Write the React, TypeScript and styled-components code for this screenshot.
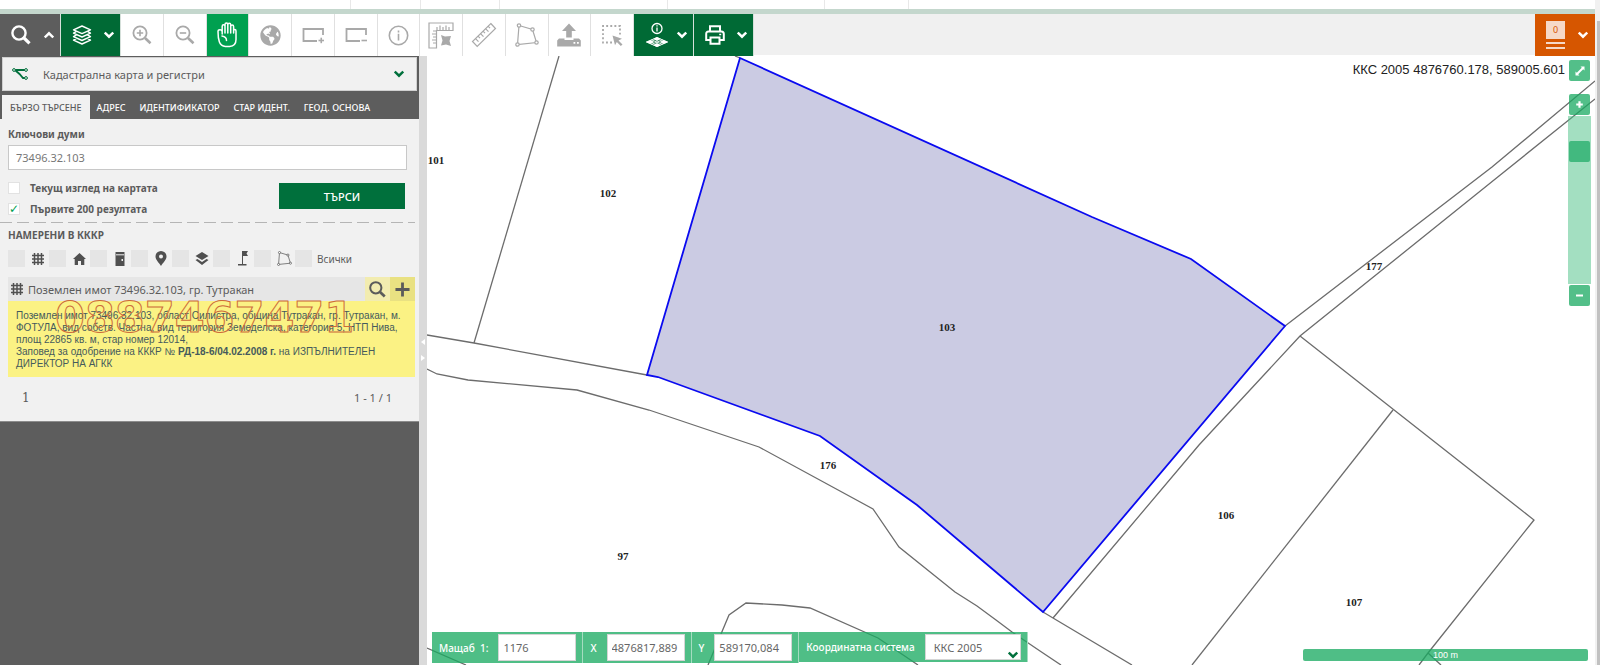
import React from "react";
import styled, { createGlobalStyle, css } from "styled-components";
import { FaGlobeAmericas } from "react-icons/fa";

const GlobalStyle = createGlobalStyle`
  *, *::before, *::after { box-sizing: border-box; }
  body { margin: 0; background: #fff; font-family: "Noto Sans", sans-serif; font-size: 11px; color: #5b5b5b; }
  button, input, select { font: inherit; color: inherit; margin: 0; }
  button { border: 0; padding: 0; background: none; cursor: pointer; }
  svg { display: block; flex: none; }
`;

const Page = styled.div`
  display: flex;
  height: 100vh;
  overflow: hidden;
`;

const Main = styled.div`
  flex: 1;
  min-width: 0;
  display: flex;
  flex-direction: column;
`;

const ScrollTrack = styled.div`
  width: 5px;
  padding: 21px 0 0 2px;
  background: #f1f1f1;
`;

const ScrollThumb = styled.div`
  height: 100%;
  background: #c1c1c1;
`;

/* ---------- header ---------- */

const HeaderStrip = styled.div`
  display: grid;
  grid-template-columns: 351px 70px 79px 168px 157px 84px 1fr;
  height: 14px;
  flex: none;
  border-bottom: 5px solid #c4d7cd;
`;

const HeaderCell = styled.div`
  border-right: 1px solid #e8e8e8;
  &:last-child { border-right: 0; }
`;

const Toolbar = styled.div`
  display: flex;
  height: 42px;
  flex: none;
`;

const ToolbarFill = styled.div`
  flex: 1;
  height: 41px;
  background: #f0f0f0;
`;

const MenuButton = styled.button<{ $bg: string; $width?: number }>`
  display: flex;
  align-items: center;
  justify-content: space-between;
  width: ${(p) => p.$width ?? 60}px;
  height: 42px;
  padding: 0 6px 0 11px;
  color: #fff;
  background: ${(p) => p.$bg};
  border-right: 1px solid #d5e0da;
`;

const ToolGrid = styled.div`
  display: grid;
  grid-template-columns: repeat(12, 1fr);
  width: 513px;
`;

const ToolButton = styled.button<{ $active?: boolean }>`
  display: flex;
  align-items: center;
  justify-content: center;
  color: ${(p) => (p.$active ? "#fff" : "#a9a9a9")};
  background: ${(p) => (p.$active ? "#00a050" : "#fff")};
  border-right: 1px solid #e0e0e0;
`;

const BasketButton = styled.button`
  display: flex;
  align-items: center;
  justify-content: space-between;
  width: 60px;
  height: 42px;
  padding: 0 7px 0 11px;
  color: #fff;
  background: #d65600;
`;

const BasketStack = styled.span`
  display: flex;
  flex-direction: column;
  gap: 3px;
  width: 19px;
`;

const BasketCount = styled.span`
  height: 18px;
  line-height: 18px;
  font-size: 9px;
  text-align: center;
  color: #d65600;
  background: #f6d9c8;
`;

const BasketLine = styled.span`
  height: 2px;
  background: #f6d9c8;
`;

/* ---------- side panel ---------- */

const Body = styled.div`
  flex: 1;
  min-height: 0;
  display: flex;
`;

const Panel = styled.aside`
  width: 419px;
  flex: none;
  background: #5d5d5d;
`;

const RegisterPicker = styled.button`
  display: flex;
  align-items: center;
  width: 415px;
  height: 34px;
  margin: 1px 0 4px 2px;
  padding: 0 12px 0 9px;
  gap: 15px;
  text-align: left;
  background: #f1f1f1;
  border: 1px solid #d0d0d0;
`;

const RegisterName = styled.span`
  flex: 1;
`;

const PickerArrow = styled.span`
  color: #00703c;
`;

const Tabs = styled.div`
  display: flex;
  height: 24px;
  padding-left: 2px;
`;

const Tab = styled.button<{ $active?: boolean }>`
  padding: 0 7px;
  font-size: 9px;
  font-weight: 500;
  white-space: nowrap;
  color: #fff;
  ${(p) =>
    p.$active &&
    css`
      padding: 0 8px;
      background: #f1f1f1;
      color: #5b5b5b;
    `}
`;

const PanelContent = styled.div`
  height: 303px;
  background: #f1f1f1;
  border-bottom: 1px solid #8c8c8c;
`;

const SearchForm = styled.form`
  padding: 7px 13px 0 8px;
`;

const FieldLabel = styled.label`
  display: block;
  line-height: 16px;
  font-size: 10px;
  font-weight: 700;
`;

const KeywordInput = styled.input`
  display: block;
  width: 399px;
  height: 25px;
  margin-top: 3px;
  padding: 0 7px;
  color: #777;
  background: #fff;
  border: 1px solid #c8c8c8;
  outline: 0;
`;

const FormRow = styled.div`
  display: flex;
  justify-content: space-between;
  padding: 7px 0 0;
  height: 52px;
`;

const CheckList = styled.div`
  display: flex;
  flex-direction: column;
`;

const CheckLabel = styled.label`
  display: flex;
  align-items: center;
  gap: 10px;
  height: 21px;
  font-size: 10px;
  font-weight: 700;
`;

const CheckBox = styled.input`
  appearance: none;
  display: grid;
  place-items: center;
  width: 12px;
  height: 12px;
  background: #fff;
  border: 1px solid #e2e2e2;
  &:checked::after {
    content: "✓";
    font: 12px/10px "DejaVu Sans", sans-serif;
    color: #00a050;
  }
`;

const SearchButton = styled.button`
  width: 126px;
  height: 26px;
  margin: 6px 1px 0 0;
  color: #fff;
  font-weight: 500;
  background: #00703c;
`;

const Dashes = styled.div`
  width: 415px;
  height: 1px;
  background: repeating-linear-gradient(90deg, #b5b5b5 0 12px, transparent 12px 17px);
`;

const ResultHeading = styled.h2`
  margin: 0;
  padding: 3px 8px 0;
  font-size: 10px;
  line-height: 18px;
  font-weight: 700;
`;

const FilterRow = styled.div`
  display: flex;
  padding: 6px 8px 10px;
`;

const FilterLabel = styled.label`
  display: flex;
  align-items: center;
  width: 41px;
  white-space: nowrap;
  font-size: 10px;
`;

const FilterBox = styled.input`
  appearance: none;
  flex: none;
  width: 17px;
  height: 17px;
  background: #e5e5e5;
`;

const FilterIcon = styled.span`
  flex: 1;
  display: grid;
  place-items: center;
  padding-left: 2px;
`;

const FilterText = styled.span`
  padding-left: 5px;
`;

const ResultHead = styled.div`
  display: flex;
  align-items: center;
  width: 407px;
  height: 24px;
  margin-left: 8px;
  padding-left: 3px;
  gap: 5px;
  background: #e6e6e6;
`;

const ResultTitle = styled.span`
  flex: 1;
`;

const ResultActions = styled.div`
  display: flex;
`;

const ResultAction = styled.button<{ $bg: string }>`
  display: grid;
  place-items: center;
  width: 25px;
  height: 24px;
  color: #5b5b5b;
  background: ${(p) => p.$bg};
`;

const ResultBody = styled.div`
  position: relative;
  width: 407px;
  height: 76px;
  margin-left: 8px;
  padding: 9px 8px;
  font: 10px/12px "Liberation Sans", Arial, sans-serif;
  color: #455a5c;
  background: #fbf284;
`;

const ResultText = styled.p`
  margin: 0;
  white-space: nowrap;
`;

const Watermark = styled.span`
  position: absolute;
  top: -5px;
  left: 47px;
  font: 700 43px/43px "DejaVu Sans", sans-serif;
  color: transparent;
  -webkit-text-stroke: 1px #cd6b3a;
`;

const Pager = styled.div`
  display: flex;
  justify-content: space-between;
  padding: 12px 27px 0 22px;
  line-height: 18px;
`;

const PageNumber = styled.span`
  font-family: "DejaVu Serif", serif;
  font-size: 12px;
`;

const Splitter = styled.div`
  display: flex;
  flex-direction: column;
  align-items: center;
  justify-content: center;
  gap: 10px;
  width: 8px;
  flex: none;
  padding-bottom: 22px;
  background: #dadada;
`;

/* ---------- map ---------- */

const MapArea = styled.main`
  position: relative;
  flex: 1;
  min-width: 0;
  overflow: hidden;
  background: #fff;
`;

const MapDrawing = styled.svg`
  position: absolute;
  inset: 0;
  width: 100%;
  height: 100%;
`;

const Coordinates = styled.output`
  position: absolute;
  top: 5px;
  right: 30px;
  font: 13px/18px "Liberation Sans", Arial, sans-serif;
  color: #222;
`;

const MapControls = styled.div`
  position: absolute;
  top: 4px;
  right: 4px;
  width: 23px;
  display: flex;
  flex-direction: column;
  align-items: center;
`;

const MapButton = styled.button<{ $spaced?: boolean }>`
  display: grid;
  place-items: center;
  width: 21px;
  height: 21px;
  margin-bottom: ${(p) => (p.$spaced ? 13 : 0)}px;
  color: #fff;
  border-radius: 2px;
  background: rgba(26, 170, 98, 0.75);
`;

const ZoomSlider = styled.input`
  appearance: none;
  writing-mode: vertical-lr;
  width: 23px;
  height: 168px;
  margin: 1px 0;
  background: rgba(72, 191, 131, 0.5);
  &::-webkit-slider-thumb {
    appearance: none;
    width: 21px;
    height: 21px;
    border-radius: 2px;
    background: #42b97f;
  }
`;

const StatusBar = styled.form`
  position: absolute;
  left: 5px;
  bottom: 2px;
  display: flex;
  align-items: flex-start;
`;

const StatusField = styled.label<{ $short?: boolean }>`
  display: flex;
  align-items: center;
  gap: 10px;
  height: ${(p) => (p.$short ? 30 : 31)}px;
  padding: 0 6px 0 7px;
  font-size: 10px;
  font-weight: 500;
  color: #fff;
  background: rgba(26, 170, 98, 0.77);
  border-right: 1px solid #a5dcc0;
  white-space: pre;
`;

const StatusInput = styled.input`
  width: 78px;
  height: 27px;
  padding: 0 4px;
  font-size: 11px;
  font-weight: 400;
  color: #666;
  background: #fff;
  border: 1px solid #d5d5d5;
`;

const SelectWrap = styled.span`
  position: relative;
  display: block;
`;

const SystemSelect = styled.select`
  appearance: none;
  display: block;
  width: 96px;
  height: 26px;
  padding: 0 8px;
  font-size: 11px;
  font-weight: 400;
  color: #666;
  background: #fff;
  border: 1px solid #d5d5d5;
  border-radius: 0;
`;

const SelectArrow = styled.span`
  position: absolute;
  right: 3px;
  bottom: 0;
  color: #00703c;
  pointer-events: none;
`;

const ScaleLine = styled.div`
  position: absolute;
  right: 7px;
  bottom: 4px;
  width: 285px;
  height: 12px;
  font: 9px/12px "Liberation Sans", Arial, sans-serif;
  text-align: center;
  color: #fff;
  border-radius: 2px;
  background: rgba(26, 170, 98, 0.77);
`;

/* ---------- icons ---------- */

const Chevron = ({ up, size = 10, w = 2.4 }: { up?: boolean; size?: number; w?: number }) => (
  <svg width={size} height={size} viewBox="0 0 10 10" fill="none" stroke="currentColor" strokeWidth={w}>
    <path d={up ? "M.8 7.5 5 3.3 9.2 7.5" : "M.8 2.500 5 6.700 9.200 2.500"} />
  </svg>
);

const Magnifier = ({ size = 20, sign, w = 2.4 }: { size?: number; sign?: string; w?: number }) => (
  <svg width={size} height={size} viewBox="0 0 20 20" fill="none" stroke="currentColor" strokeWidth={w}>
    <circle cx="8" cy="8" r="6.6" />
    <path d="m13 13 5.500 5.300" strokeWidth={w + 0.8} />
    {sign === "+" && <path d="M8 4.8v6.4M4.8 8h6.4" strokeWidth="1.6" />}
    {sign === "-" && <path d="M4.8 8h6.4" strokeWidth="1.6" />}
  </svg>
);

const LayersIcon = () => (
  <svg width="20" height="20" viewBox="0 0 20 20" fill="none" stroke="currentColor" strokeWidth="1.4" strokeLinejoin="round">
    <path d="M10 1 18.5 4.8 10 8.6 1.5 4.8Z" />
    <path d="M4.5 6.4 1.5 8.2 10 12 18.5 8.2 15.5 6.4M4.5 9.9 1.5 11.7 10 15.5 18.5 11.7 15.5 9.9M4.5 13.4 1.5 15.2 10 19 18.5 15.2 15.5 13.4" />
  </svg>
);

const HandIcon = () => (
  <svg width="20" height="26" viewBox="0 0 20 26" fill="none" stroke="currentColor" strokeWidth="1.5" strokeLinecap="round" strokeLinejoin="round">
    <path d="M5.2 12V4.3c0-2.1 2.8-2.1 2.8 0V11M8 4.3V2.6c0-2.1 2.8-2.1 2.8 0V11M10.800 2.800c0-2.100 2.900-2.100 2.900 0V11M13.700 4.500c0-2.100 2.900-2.100 2.900 0V11M16.600 9c0-1.900 2.400-1.900 2.400 0v8.500c0 4.300-2.600 6.700-6.400 7H8.400c-3-.3-5-1.700-6-4.500C1.300 17 1 14 1 9.500c0-1 .7-1.700 2-1.700 1 0 2 .7 2.200 1.700M5 14c3 .5 4.500 2 4.500 4.500" />
  </svg>
);

const FrameIcon = ({ sign }: { sign: string }) => (
  <svg width="24" height="20" viewBox="0 0 24 20" fill="none" stroke="currentColor" strokeWidth="1.6">
    <path d="M16 16H2.500V4H22v6" strokeWidth="1.800" />
    <path d="M17.500 15.500h5.500" />
    {sign === "+" && <path d="M20.250 12.700v5.500" />}
  </svg>
);

const InfoIcon = () => (
  <svg width="21" height="21" viewBox="0 0 21 21" fill="none" stroke="currentColor" strokeWidth="1.600">
    <circle cx="10.500" cy="10.500" r="9.200" />
    <path d="M10.500 8.800v6.700M10.500 5.500v2" />
  </svg>
);

const RulerAreaIcon = () => (
  <svg width="26" height="27" viewBox="0 0 26 27" fill="none" stroke="#a9a9a9" strokeWidth="1.2">
    <path d="M1 1h24v7.500H8.500V26H1Z" />
    <path d="M9 5v3M12 3.500v5M15 5v3M18 3.500v5M21 5v3M5 9h3.500M4 12h4.500M5 15h3.500M4 18h4.500M5 21h3.500" />
    <path d="m13 13 4 1.500 6-.5-1.500 5 1.500 5-5-1.500-5 1 1.500-5Z" fill="#a9a9a9" stroke="none" />
  </svg>
);

const RulerIcon = () => (
  <svg width="26" height="26" viewBox="0 0 26 26" fill="none" stroke="currentColor" strokeWidth="1.2">
    <path d="M19.800 1.500 24.500 6.500 6.200 24.500 1.500 19.500Z" />
    <path d="m17 4.200 2 2M14.500 6.700l3 3M12 9.200l2 2M9.500 11.700l3 3M7 14.200l2 2M4.500 16.700l3 3" />
  </svg>
);

const PolygonIcon = ({ size = 24 }: { size?: number }) => (
  <svg width={size} height={size} viewBox="0 0 24 24" fill="#fff" stroke="currentColor" strokeWidth="1.200">
    <path d="M4 2.500 17.500 6.500 21.500 19.500 2.500 21.500Z" fill="none" />
    <circle cx="4" cy="2.500" r="1.700" />
    <circle cx="17.500" cy="6.500" r="1.700" />
    <circle cx="21.500" cy="19.500" r="1.700" />
    <circle cx="2.500" cy="21.500" r="1.700" />
  </svg>
);

const UploadIcon = () => (
  <svg width="24" height="24" viewBox="0 0 24 24" fill="currentColor">
    <path d="M12 .5 19 8h-4.200v6.500H9.200V8H5Z" />
    <path d="M2 15.500h5.500v1.500h9v-1.500H22l1.800 2v6H.2v-6Z" />
    <path d="M16.500 19h1.800v1.800h-1.800zM20 19h1.800v1.800H20z" fill="#fff" />
  </svg>
);

const MarqueeIcon = () => (
  <svg width="22" height="22" viewBox="0 0 22 22" fill="none" stroke="currentColor" strokeWidth="1.8">
    <path d="M11 18.500H2V2h17v9" strokeDasharray="1.900 2.200" />
    <path d="m11.500 11.500 9.500 3.200-3.500 1.800 4 4-1.700 1.500-4-4-1.800 3.200Z" fill="currentColor" stroke="none" />
  </svg>
);

const InfoLayersIcon = () => (
  <svg width="24" height="26" viewBox="0 0 24 26" fill="none" stroke="currentColor" strokeWidth="1.300">
    <circle cx="12" cy="6.500" r="5" />
    <path d="M12 5.500v4M12 3.300v1.300" />
    <path d="m12 15 4 2-4 2-4-2ZM5.500 18l4 2-4 2L.8 20ZM18.500 18l4.700 2-4.700 2-4-2ZM12 21l4 2-4 2-4-2Z" fill="currentColor" stroke="none" />
    <path d="M12 15.500 22.500 20 12 24.600 1.500 20ZM6.500 17.800l11 4.600M17.500 17.800l-11 4.600" strokeWidth=".9" />
  </svg>
);

const PrinterIcon = () => (
  <svg width="20" height="20" viewBox="0 0 20 20" fill="none" stroke="currentColor" strokeWidth="2">
    <path d="M5 6.500V1.200h10v5.300M5 15H1.200V9c0-1.600.8-2.500 2.300-2.500h13c1.500 0 2.300.9 2.300 2.500v6H15" />
    <path d="M5.500 12.500h9v6.300h-9z" />
    <path d="M14.200 9.500h2" strokeWidth="1.500" />
  </svg>
);

const BranchIcon = () => (
  <svg width="16" height="12" viewBox="0 0 16 12" fill="none" stroke="#00703c" strokeWidth="1">
    <path d="M3 2h10M3.500 2.500l4 3.500 3.500 4h2" strokeWidth="1.800" />
    <circle cx="2" cy="2" r="1.400" fill="#f1f1f1" />
    <circle cx="14" cy="2" r="1.400" fill="#f1f1f1" />
    <circle cx="14" cy="10" r="1.400" fill="#f1f1f1" />
  </svg>
);

const GridIcon = () => (
  <svg width="12" height="12" viewBox="0 0 12 12" stroke="#505050" strokeWidth="1.500">
    <path d="M2.500 0v12M6 0v12M9.500 0v12M0 2.500h12M0 6h12M0 9.500h12" />
  </svg>
);

const HouseIcon = () => (
  <svg width="13" height="12" viewBox="0 0 13 12" fill="#505050">
    <path d="M6.500 0 13 6h-1.700v6H8V8H5v4H1.700V6H0Z" />
  </svg>
);

const DoorIcon = () => (
  <svg width="12" height="14" viewBox="0 0 12 14">
    <path d="M1.500 0h9v14h-9z" fill="#505050" />
    <path d="M2 2.800h8" stroke="#f1f1f1" />
    <path d="M7.500 7h1.500v2H7.500z" fill="#f1f1f1" />
  </svg>
);

const PinIcon = () => (
  <svg width="12" height="15" viewBox="0 0 12 15">
    <path d="M6 0a5.500 5.500 0 0 0-5.500 5.500C.5 9 4 11.500 6 15c2-3.500 5.500-6 5.500-9.500A5.500 5.500 0 0 0 6 0Z" fill="#505050" />
    <circle cx="6" cy="5.500" r="2" fill="#f1f1f1" />
  </svg>
);

const StackIcon = () => (
  <svg width="14" height="14" viewBox="0 0 14 14" fill="#505050">
    <path d="m7 0 6.500 4L7 8 .5 4ZM.5 8 2.500 7 7 10l4.500-3 2 1L7 13 .5 8Z" />
  </svg>
);

const FlagIcon = () => (
  <svg width="12" height="15" viewBox="0 0 12 15" fill="#505050">
    <path d="M5 0h6L9.500 2.500 11 5H6v8h3.500v1.600H1V13h4Z" />
  </svg>
);

const PlusIcon = ({ size, w }: { size: number; w: number }) => (
  <svg width={size} height={size} viewBox="0 0 16 16" stroke="currentColor" strokeWidth={w}>
    <path d="M8 .5v15M.5 8h15" />
  </svg>
);

const MinusIcon = () => (
  <svg width="7" height="7" viewBox="0 0 7 7" stroke="currentColor" strokeWidth="2">
    <path d="M0 3.500h7" />
  </svg>
);

const ExpandIcon = () => (
  <svg width="10" height="10" viewBox="0 0 10 10" fill="currentColor">
    <path d="M5.500.5h4v4L8.200 3.200 3.200 8.200 4.500 9.500h-4v-4L1.800 6.800l5-5Z" />
  </svg>
);

const Triangle = ({ left }: { left?: boolean }) => (
  <svg width="4" height="6" viewBox="0 0 4 6" fill="#fff">
    <path d={left ? "M4 0v6L0 3Z" : "M0 0v6l4-3Z"} />
  </svg>
);

/* ---------- data ---------- */

const tools: { name: string; icon: React.ReactNode; active?: boolean }[] = [
  { name: "Увеличаване", icon: <Magnifier sign="+" w={1.8} /> },
  { name: "Намаляване", icon: <Magnifier sign="-" w={1.8} /> },
  { name: "Местене", icon: <HandIcon />, active: true },
  { name: "Цялата карта", icon: <FaGlobeAmericas size={21} /> },
  { name: "Увеличаване с рамка", icon: <FrameIcon sign="+" /> },
  { name: "Намаляване с рамка", icon: <FrameIcon sign="-" /> },
  { name: "Информация", icon: <InfoIcon /> },
  { name: "Измерване на площ", icon: <RulerAreaIcon /> },
  { name: "Измерване на разстояние", icon: <RulerIcon /> },
  { name: "Полигон", icon: <PolygonIcon /> },
  { name: "Качване", icon: <UploadIcon /> },
  { name: "Избор", icon: <MarqueeIcon /> },
];

const tabs = ["БЪРЗО ТЪРСЕНЕ", "АДРЕС", "ИДЕНТИФИКАТОР", "СТАР ИДЕНТ.", "ГЕОД. ОСНОВА"];

const filters: { name: string; icon: React.ReactNode }[] = [
  { name: "Поземлени имоти", icon: <GridIcon /> },
  { name: "Сгради", icon: <HouseIcon /> },
  { name: "Самостоятелни обекти", icon: <DoorIcon /> },
  { name: "Адреси", icon: <PinIcon /> },
  { name: "Слоеве", icon: <StackIcon /> },
  { name: "Геодезически точки", icon: <FlagIcon /> },
  { name: "Полигони", icon: <PolygonIcon size={15} /> },
];

const boundaries = [
  "559,56 474,343",
  "427,335 474,343 647,375",
  "427,369 437,374 468,380 577,390 649,410 759,447 873,509 899,547 955,592 977,606 996,620 1012,632 1040,651 1061,665",
  "708,665 729,615 746,603 782,605 810,608 878,638 918,665",
  "427,648 466,665",
  "735,56 740,58",
  "1285,326 1492,167 1595,81",
  "1595,99 1499,176 1300,336 1199,445 1053,618",
  "1300,336 1534,520 1428,653 1419,665",
  "1428,653 1441,665",
  "1393,410 1192,665",
  "1043,612 1053,618 1132,665",
];

const parcels: [string, number, number][] = [
  ["101", 436, 164],
  ["102", 608, 197],
  ["103", 947, 331],
  ["176", 828, 469],
  ["97", 623, 560],
  ["106", 1226, 519],
  ["107", 1354, 606],
  ["177", 1374, 270],
];

const CadastralMap = () => (
  <MapDrawing viewBox="427 56 1168 609" preserveAspectRatio="xMinYMin slice" role="img" aria-label="Кадастрална карта">
    <g fill="none" stroke="#6c6c6c" strokeWidth="1.300">
      {boundaries.map((points) => (
        <polyline key={points} points={points} />
      ))}
    </g>
    <polygon
      points="740,58 1092,217 1191,259 1285,326 1043,612 917,505 820,436 658,377 647,375"
      fill="#cbcbe3"
      stroke="#0a0af0"
      strokeWidth="1.800"
    />
    <g fontFamily="'Liberation Serif', serif" fontWeight="700" fontSize="11" textAnchor="middle" fill="#222">
      {parcels.map(([label, x, y]) => (
        <text key={label} x={x} y={y}>
          {label}
        </text>
      ))}
    </g>
  </MapDrawing>
);

export default function App() {
  return (
    <>
      <GlobalStyle />
      <Page>
        <Main>
          <HeaderStrip>
            {[0, 1, 2, 3, 4, 5, 6].map((i) => (
              <HeaderCell key={i} />
            ))}
          </HeaderStrip>
          <Toolbar>
            <MenuButton $bg="#5d5d5d" $width={61} aria-label="Търсене">
              <Magnifier />
              <Chevron up />
            </MenuButton>
            <MenuButton $bg="#006a35" aria-label="Слоеве">
              <LayersIcon />
              <Chevron />
            </MenuButton>
            <ToolGrid>
              {tools.map((t) => (
                <ToolButton key={t.name} aria-label={t.name} $active={t.active}>
                  {t.icon}
                </ToolButton>
              ))}
            </ToolGrid>
            <MenuButton $bg="#006a35" aria-label="Информация за слоеве">
              <InfoLayersIcon />
              <Chevron />
            </MenuButton>
            <MenuButton $bg="#006a35" aria-label="Печат">
              <PrinterIcon />
              <Chevron />
            </MenuButton>
            <ToolbarFill />
            <BasketButton aria-label="Кошница">
              <BasketStack>
                <BasketCount>0</BasketCount>
                <BasketLine />
                <BasketLine />
              </BasketStack>
              <Chevron />
            </BasketButton>
          </Toolbar>
          <Body>
            <Panel>
              <RegisterPicker>
                <BranchIcon />
                <RegisterName>Кадастрална карта и регистри</RegisterName>
                <PickerArrow>
                  <Chevron />
                </PickerArrow>
              </RegisterPicker>
              <Tabs role="tablist">
                {tabs.map((name, i) => (
                  <Tab key={name} role="tab" aria-selected={i === 0} $active={i === 0}>
                    {name}
                  </Tab>
                ))}
              </Tabs>
              <PanelContent>
                <SearchForm>
                  <FieldLabel htmlFor="keywords">Ключови думи</FieldLabel>
                  <KeywordInput id="keywords" defaultValue="73496.32.103" />
                  <FormRow>
                    <CheckList>
                      <CheckLabel>
                        <CheckBox type="checkbox" />
                        Текущ изглед на картата
                      </CheckLabel>
                      <CheckLabel>
                        <CheckBox type="checkbox" defaultChecked />
                        Първите 200 резултата
                      </CheckLabel>
                    </CheckList>
                    <SearchButton type="button">ТЪРСИ</SearchButton>
                  </FormRow>
                </SearchForm>
                <Dashes />
                <ResultHeading>НАМЕРЕНИ В КККР</ResultHeading>
                <FilterRow>
                  {filters.map((f) => (
                    <FilterLabel key={f.name}>
                      <FilterBox type="checkbox" aria-label={f.name} />
                      <FilterIcon>{f.icon}</FilterIcon>
                    </FilterLabel>
                  ))}
                  <FilterLabel>
                    <FilterBox type="checkbox" />
                    <FilterText>Всички</FilterText>
                  </FilterLabel>
                </FilterRow>
                <ResultHead>
                  <GridIcon />
                  <ResultTitle>Поземлен имот 73496.32.103, гр. Тутракан</ResultTitle>
                  <ResultActions>
                    <ResultAction $bg="#f2ecb0" aria-label="Покажи">
                      <Magnifier size={17} />
                    </ResultAction>
                    <ResultAction $bg="#e9e182" aria-label="Добави">
                      <PlusIcon size={15} w={3} />
                    </ResultAction>
                  </ResultActions>
                </ResultHead>
                <ResultBody>
                  <ResultText>
                    Поземлен имот 73496.32.103, област Силистра, община Тутракан, гр. Тутракан, м.
                    <br />
                    ФОТУЛА, вид собств. Частна, вид територия Земеделска, категория 5, НТП Нива,
                    <br />
                    площ 22865 кв. м, стар номер 12014,
                    <br />
                    Заповед за одобрение на КККР № <b>РД-18-6/04.02.2008 г.</b> на ИЗПЪЛНИТЕЛЕН
                    <br />
                    ДИРЕКТОР НА АГКК
                  </ResultText>
                  <Watermark>0887467471</Watermark>
                </ResultBody>
                <Pager>
                  <PageNumber>1</PageNumber>
                  <span>1 - 1 / 1</span>
                </Pager>
              </PanelContent>
            </Panel>
            <Splitter>
              <Triangle left />
              <Triangle />
            </Splitter>
            <MapArea>
              <CadastralMap />
              <Coordinates>ККС 2005 4876760.178, 589005.601</Coordinates>
              <MapControls>
                <MapButton $spaced aria-label="Цял екран">
                  <ExpandIcon />
                </MapButton>
                <MapButton aria-label="Приближи">
                  <PlusIcon size={7} w={5} />
                </MapButton>
                <ZoomSlider type="range" min="0" max="6" defaultValue="1" aria-label="Мащаб" />
                <MapButton aria-label="Отдалечи">
                  <MinusIcon />
                </MapButton>
              </MapControls>
              <StatusBar>
                <StatusField>
                  {"Мащаб  1:"}
                  <StatusInput defaultValue="1176" />
                </StatusField>
                <StatusField>
                  X
                  <StatusInput defaultValue="4876817,889" />
                </StatusField>
                <StatusField>
                  Y
                  <StatusInput defaultValue="589170,084" />
                </StatusField>
                <StatusField $short>
                  Координатна система
                  <SelectWrap>
                    <SystemSelect defaultValue="ККС 2005">
                      <option>ККС 2005</option>
                    </SystemSelect>
                    <SelectArrow>
                      <Chevron />
                    </SelectArrow>
                  </SelectWrap>
                </StatusField>
              </StatusBar>
              <ScaleLine>100 m</ScaleLine>
            </MapArea>
          </Body>
        </Main>
        <ScrollTrack>
          <ScrollThumb />
        </ScrollTrack>
      </Page>
    </>
  );
}
